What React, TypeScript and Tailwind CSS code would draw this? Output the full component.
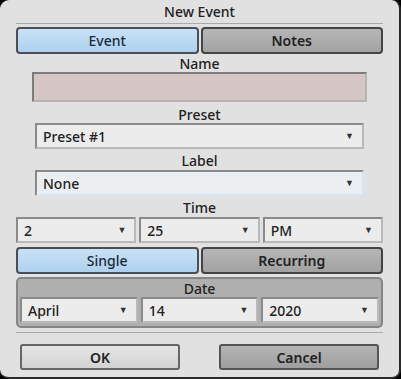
import React from "react";

const font = { fontFamily: '"Noto Sans", "Open Sans", sans-serif' };

const Select = ({ value, className = "" }: { value: string; className?: string }) => (
    <div className={`flex items-center justify-between h-[26px] bg-[#ececec] border-2 border-t-[#8a8a8a] border-l-[#8a8a8a] border-b-[#b9b9b9] border-r-[#b9b9b9] pl-[6px] pr-[8px] text-[14px] font-medium text-[#222] ${className}`}>
        <span>{value}</span>
        <span className="text-[9px] text-[#333]">▼</span>
    </div>
);

const Label = ({ children, className = "" }: { children: React.ReactNode; className?: string }) => (
    <div className={`text-center text-[14px] leading-[16px] font-medium text-[#222] ${className}`}>{children}</div>
);

export default function App() {
    return (
        <div className="w-[401px] h-[379px] bg-black" style={font}>
            <div className="w-[401px] h-[379px] bg-[#e1e1e1] rounded-[9px] border-r-2 border-b-2 border-[#2a2a2a] flex flex-col">
                <div className="pt-[4px] text-center text-[14px] leading-[16px] font-medium text-[#222]">New Event</div>
                <div className="mx-[16px] mt-[3px] h-px bg-[#a9a9a9]" />

                <div className="mx-[16px] mt-[3px] flex gap-[2px]">
                    <div className="flex-1 h-[27px] rounded-[4px] border-2 border-[#4b4f55] bg-gradient-to-b from-[#c8e2f7] to-[#aed1ee] flex items-center justify-center text-[14px] font-medium text-[#1d2b3a]">
                        Event
                    </div>
                    <div className="flex-1 h-[27px] rounded-[4px] border-2 border-[#444] bg-gradient-to-b from-[#b6b6b6] to-[#a2a2a2] flex items-center justify-center text-[14px] font-semibold text-[#222]">
                        Notes
                    </div>
                </div>

                <Label className="mt-[2px]">Name</Label>
                <div className="mx-[32px] h-[30px] bg-[#d6c5c5] border-2 border-t-[#7c7c7c] border-l-[#7c7c7c] border-b-[#b5b5b5] border-r-[#b5b5b5]" />

                <Label className="mt-[5px]">Preset</Label>
                <Select value="Preset #1" className="mx-[35px]" />

                <Label className="mt-[4px]">Label</Label>
                <Select value="None" className="mx-[35px] mt-[1px] bg-[#eceff2] border-b-[#d5e6f5] border-r-[#d5e6f5]" />

                <Label className="mt-[4px]">Time</Label>
                <div className="mx-[16px] mt-[1px] flex gap-[3px]">
                    <Select value="2" className="flex-1 border-[#9d9d9d]" />
                    <Select value="25" className="flex-1 border-[#9d9d9d]" />
                    <Select value="PM" className="flex-1 border-[#9d9d9d]" />
                </div>

                <div className="mx-[16px] mt-[4px] flex gap-[2px]">
                    <div className="flex-1 h-[27px] rounded-[4px] border-2 border-[#4b4f55] bg-gradient-to-b from-[#c8e2f7] to-[#aed1ee] flex items-center justify-center text-[14px] font-medium text-[#1d2b3a]">
                        Single
                    </div>
                    <div className="flex-1 h-[27px] rounded-[4px] border-2 border-[#444] bg-gradient-to-b from-[#b6b6b6] to-[#a2a2a2] flex items-center justify-center text-[14px] font-semibold text-[#222]">
                        Recurring
                    </div>
                </div>

                <div className="mx-[16px] mt-[3px] rounded-[5px] border-2 border-[#858585] bg-[#afafaf] px-[2px] pb-[3px]">
                    <Label className="pt-[2px]">Date</Label>
                    <div className="flex gap-[3px]">
                        <Select value="April" className="flex-1 border-[#9d9d9d]" />
                        <Select value="14" className="flex-1 border-[#9d9d9d]" />
                        <Select value="2020" className="flex-1 border-[#9d9d9d]" />
                    </div>
                </div>

                <div className="mx-[16px] mt-[4px] h-px bg-[#a9a9a9]" />

                <div className="mx-[20px] mt-[11px] flex justify-between">
                    <div className="w-[160px] h-[26px] rounded-[3px] border-2 border-[#666] bg-gradient-to-b from-[#e6e6e6] to-[#d2d2d2] flex items-center justify-center text-[14px] font-semibold text-[#222]">
                        OK
                    </div>
                    <div className="w-[160px] h-[26px] rounded-[3px] border-2 border-[#555] bg-gradient-to-b from-[#b4b4b4] to-[#9f9f9f] flex items-center justify-center text-[14px] font-semibold text-[#222]">
                        Cancel
                    </div>
                </div>
            </div>
        </div>
    );
}
